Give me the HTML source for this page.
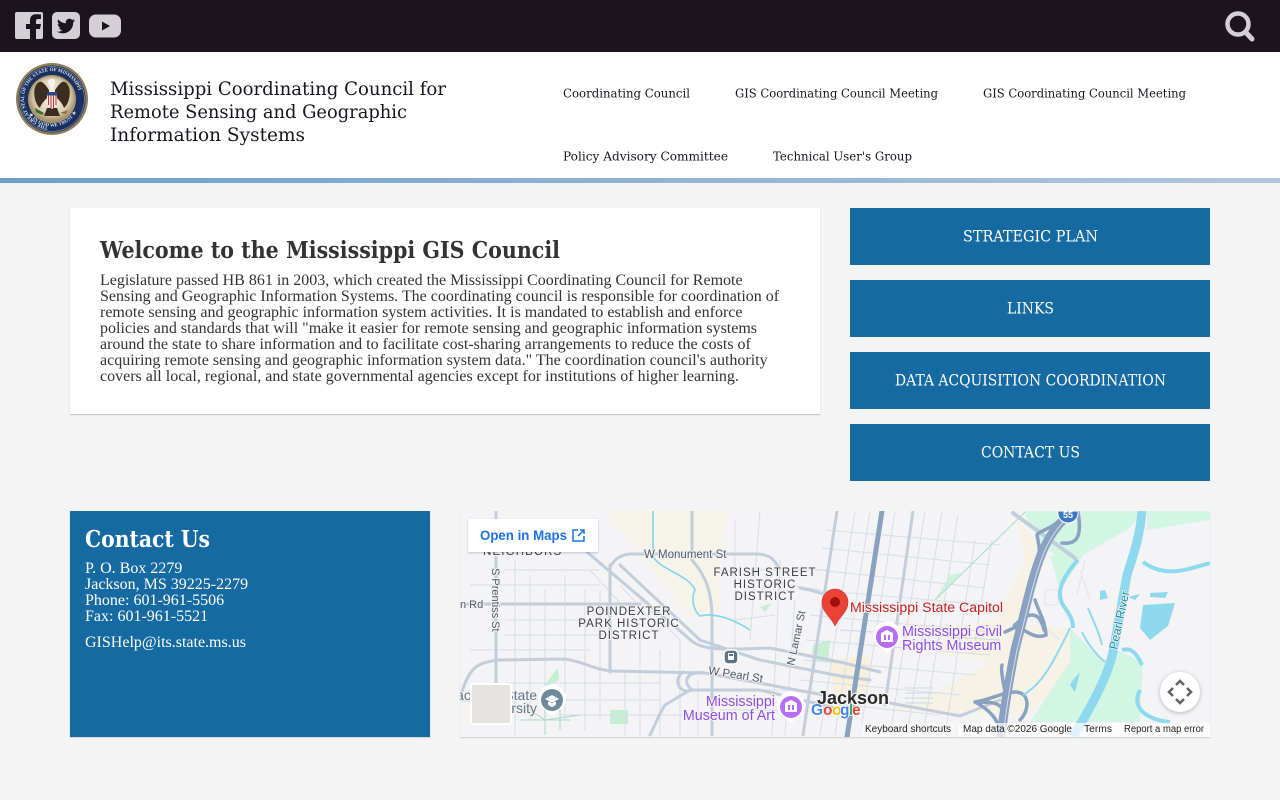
<!DOCTYPE html>
<html lang="en">
<head>
<meta charset="utf-8">
<title>Mississippi GIS Council</title>
<style>
html,body{margin:0;padding:0;width:1280px;height:800px;overflow:hidden;background:#f4f4f4}
.abs{position:absolute}
#top{left:0;top:0;width:1280px;height:52px;background:#1b141f}
#head{left:0;top:52px;width:1280px;height:126px;background:#fff}
#bar{left:0;top:178px;width:1280px;height:5px;background:linear-gradient(90deg,#6d9fc9,#b2c6de)}
#card{left:70px;top:208px;width:750px;height:206px;background:#fff;box-shadow:0 1px 1px rgba(0,0,0,.2)}
#copy{left:100px;top:273px;width:700px;font:16px/16px "Liberation Serif",serif;color:#333;white-space:nowrap}
.btn{left:850px;width:360px;height:57px;background:#146aa1}
#contact{left:70px;top:511px;width:360px;height:226px;background:#146aa1;box-shadow:0 1px 1px rgba(0,0,0,.15)}
#addr{left:85px;top:561px;font:16px/16px "Liberation Serif",serif;color:#fff;white-space:nowrap}
#mail{left:85px;top:635px;font:16px/16px "Liberation Serif",serif;color:#fff;white-space:nowrap}
#map{left:460px;top:511px;width:750px;height:226px;box-shadow:0 1px 1px rgba(0,0,0,.15)}
svg{display:block}
#overlay{left:0;top:0;pointer-events:none}
.sl{font-family:"DejaVu Serif","Liberation Serif",serif}
</style>
</head>
<body>
<div class="abs" id="top"></div>
<div class="abs" id="head"></div>
<div class="abs" id="bar"></div>
<div class="abs" id="card"></div>
<div class="abs" id="copy">Legislature passed HB 861 in 2003, which created the Mississippi Coordinating Council for Remote<br>Sensing and Geographic Information Systems. The coordinating council is responsible for coordination of<br>remote sensing and geographic information system activities. It is mandated to establish and enforce<br>policies and standards that will "make it easier for remote sensing and geographic information systems<br>around the state to share information and to facilitate cost-sharing arrangements to reduce the costs of<br>acquiring remote sensing and geographic information system data." The coordination council's authority<br>covers all local, regional, and state governmental agencies except for institutions of higher learning.</div>
<div class="abs btn" style="top:208px"></div>
<div class="abs btn" style="top:280px"></div>
<div class="abs btn" style="top:352px"></div>
<div class="abs btn" style="top:424px"></div>
<div class="abs" id="contact"></div>
<div class="abs" id="addr">P. O. Box 2279<br>Jackson, MS 39225-2279<br>Phone: 601-961-5506<br>Fax: 601-961-5521</div>
<div class="abs" id="mail">GISHelp@its.state.ms.us</div>

<div class="abs" id="map">
<svg width="750" height="226" viewBox="460 511 750 226" font-family="'Liberation Sans',sans-serif">
<defs>
<clipPath id="mc"><rect x="460" y="511" width="750" height="226"/></clipPath>
</defs>
<g clip-path="url(#mc)">
<rect x="460" y="511" width="750" height="226" fill="#f4f3f5"/>
<!-- land use -->
<path d="M607 511H727L720 562V612L690 615L647 562Z" fill="#f6f3e8"/>
<path d="M1017 520L1043 548L1020 625L1070 628L1072 665L1030 715L890 712L940 690L985 665L1000 610L1025 560Z" fill="#f6f2e6"/>
<path d="M1023 511H1143L1130 528L1083 555L1063 560L1043 546Z" fill="#d2f5e4"/>
<path d="M1147 511H1210V520L1147 530Z" fill="#d2f5e4"/>
<path d="M1070 628L1103 662L1116 650L1143 662L1140 722L1030 722L1070 662Z" fill="#d2f5e4"/>
<path d="M1050 556L1083 555L1060 592L1055 572Z" fill="#d2f5e4"/>
<path d="M830 660L870 655L868 690L835 700Z" fill="#f8f0da"/>
<path d="M935 600L950 575L961 573Z" fill="#cdf2dc"/>
<path d="M543 688L552 675L558 668L559 680Z M610 710H628V724H610Z M760 607L772 603L765 612Z M813 645L830 640L828 662L812 660Z" fill="#c5efd3"/>
<path d="M950 625L1000 620L995 660L940 655Z" fill="#f8f3e2" opacity=".8"/>
<!-- minor roads -->
<g fill="none" stroke="#d6dfe9" stroke-width="1">
<path d="M515 560V735M530 575V720M545 590V735M565 575V720M585 590V730M600 590V720M625 670V735M640 640V735M660 650V735M680 640V735M698 680V735M505 570H600M470 585H600M505 620H600M505 635H610M470 650H590M505 683H660M520 700H660M560 715H700M620 585L660 630M590 570L640 625M640 600L680 640"/>
<path d="M735 520V660M760 511L750 640M780 560L772 735M795 600L785 735M725 690H800M720 710H800M735 620L775 615M720 570H830M760 580L820 590"/>
<path d="M855 511L820 735M870 511L835 735M895 511L860 735M925 511L890 735M942 511L907 735M958 515L923 735M975 540L945 735M992 540L975 640"/>
<path d="M825 530L1000 545M822 548L990 565M818 570L985 588M815 590L990 605M810 615L990 632M806 640L990 655M804 660L975 675M800 680L960 695M800 700L940 715"/>
<path d="M1077 595L1085 560M1045 590H1058V605H1045ZM1035 620L1060 640M1080 570L1090 600" stroke="#dfe6ee"/>
<path d="M840 630L1000 640M905 688H933M905 693H933M905 698H933M905 703H933" stroke="#cdd8e4"/>
</g>
<path d="M935 600L1025 512" fill="none" stroke="#a5dfc5" stroke-width="1"/>
<path d="M500 705L520 695M530 710L545 720L580 715M520 720H570M545 700V735M560 705V730" fill="none" stroke="#a7dcc4" stroke-width="1"/>
<!-- main roads -->
<g fill="none" stroke="#c2cedc" stroke-width="3" stroke-linecap="round">
<path d="M496 511V700"/>
<path d="M460 604H640"/>
<path d="M462 692C470 665 480 662 500 660L565 659C585 662 595 670 612 671L705 673L840 698"/>
<path d="M610 567C615 558 622 554 632 554H755C770 554 775 560 778 567"/>
<path d="M587 552L693 642C705 650 720 650 770 648L840 662L880 672"/>
<path d="M620 565L700 640L760 660L840 676L870 680"/>
<path d="M610 565V672"/>
<path d="M692 511V560C705 575 712 590 712 620V735"/>
<path d="M837 511L803 735" stroke-width="3"/>
<path d="M913 511L885 705" stroke-width="3"/>
<path d="M692 690C680 680 690 670 705 673M683 672C672 680 680 695 692 690M690 690L760 690L835 708M690 690L665 705C660 712 655 725 650 735"/>
<path d="M473 700H462M800 588C808 590 815 590 840 600"/>
<path d="M890 703L960 716L1000 700"/>
<path d="M1013 513L1075 558" stroke="#c3cedb" stroke-width="4"/>
</g>
<!-- highways -->
<g fill="none" stroke="#8aa2c1" stroke-linecap="round">
<path d="M1065 518C1048 535 1040 552 1030 590L1015 650C1008 685 1004 710 1001 737" stroke-width="9"/>
<path d="M882 511L847 737" stroke-width="5"/>
<path d="M1060 520C1050 530 1040 530 1037 535C1040 550 1040 550 1037 565M1078 512C1082 535 1078 545 1062 543" stroke-width="3.5"/>
<path d="M1035 600C1040 615 1045 620 1046 635C1035 640 1025 630 1015 625C1030 610 1040 612 1044 630M1020 625L1005 632" stroke-width="3.5"/>
<path d="M975 702C990 700 1003 692 1015 692C1030 692 1030 710 1020 720M1005 692C1005 690 1000 670 1002 665M1003 710C998 700 985 703 975 702C990 710 1000 720 1000 737" stroke-width="3.5"/>
</g>
<path d="M1067 518C1050 535 1042 552 1032 590L1017 650C1010 685 1006 710 1003 737" fill="none" stroke="#d4dce8" stroke-width="1"/>
<!-- water -->
<g fill="none" stroke="#8fd9ef">
<path d="M1142 511C1140 535 1135 550 1127 575L1113 652C1108 675 1095 700 1073 737" stroke-width="9"/>
<path d="M1143 562C1165 578 1185 570 1210 563" stroke-width="4"/>
<path d="M1078 560C1060 580 1055 595 1065 608C1072 618 1073 622 1073 628" stroke-width="4"/>
<path d="M1088 608C1095 625 1100 635 1102 645M1082 632C1090 650 1105 662 1105 662M1023 695C1040 685 1050 670 1070 628" stroke-width="2"/>
<path d="M1122 650C1130 648 1135 650 1142 665M1140 690C1130 710 1150 720 1170 722" stroke-width="4"/>
<path d="M653 511V555C655 568 690 575 695 590C690 600 695 612 700 616C715 612 735 620 750 630" stroke-width="1.6" stroke="#7fd6ee"/>
</g>
<path d="M1143 605L1175 603L1168 626L1150 640L1140 628Z M1100 591L1105 590L1108 598L1100 600Z M1128 597L1140 594L1135 600Z M1150 593L1168 592L1165 598L1150 597Z M1073 680L1080 672L1075 692L1070 685Z" fill="#8fd9ef"/>
<!-- labels -->
<g fill="#3c4043" stroke="#f4f3f5" stroke-width="2" paint-order="stroke" stroke-linejoin="round">
<text x="483" y="555" font-size="11.5" letter-spacing="1.15">NEIGHBORS</text>
<text transform="translate(492,568) rotate(90)" font-size="11" fill="#4d5a66">S Prentiss St</text>
<text x="460" y="608" font-size="11" fill="#4d5a66">n Rd</text>
<text x="644" y="558" font-size="11.5" fill="#4d5a66">W Monument St</text>
<g font-size="11.5" letter-spacing="1" text-anchor="middle">
<text x="765" y="576">FARISH STREET</text><text x="765" y="588">HISTORIC</text><text x="765" y="600">DISTRICT</text>
<text x="629" y="615">POINDEXTER</text><text x="629" y="627">PARK HISTORIC</text><text x="629" y="639">DISTRICT</text>
</g>
<text transform="translate(794,666) rotate(-78)" font-size="11" fill="#4d5a66">N Lamar St</text>
<text transform="translate(708,674) rotate(9)" font-size="11.5" fill="#4d5a66">W Pearl St</text>
<text x="817" y="704" font-size="18.5" font-weight="bold" fill="#2b2b2b" stroke-width="2.5" textLength="72" lengthAdjust="spacingAndGlyphs">Jackson</text>
<text x="537" y="700" font-size="14" text-anchor="end" fill="#607787">Jackson State</text>
<text x="537" y="713" font-size="14" text-anchor="end" fill="#607787">University</text>
<g font-size="14.3" fill="#8e4fe0">
<text x="775" y="706" text-anchor="end">Mississippi</text>
<text x="775" y="720" text-anchor="end">Museum of Art</text>
<text x="902" y="636">Mississippi Civil</text>
<text x="902" y="650">Rights Museum</text>
</g>
<text x="850" y="612" font-size="14.2" fill="#c5221f" textLength="153" lengthAdjust="spacingAndGlyphs">Mississippi State Capitol</text>
<text transform="translate(1117,650) rotate(-78)" font-size="12" fill="#1c8aa6" stroke-width="1.5">Pearl River</text>
</g>
<!-- shield -->
<path d="M1058 511H1078C1079 518 1074 523 1068 523C1062 523 1057 518 1058 511Z" fill="#3d78c4" stroke="#fff"/>
<text x="1068" y="518" font-size="9" font-weight="bold" fill="#fff" text-anchor="middle">55</text>
<!-- transit -->
<rect x="724" y="650" width="14" height="14" rx="4" fill="#5d7487" stroke="#fff" stroke-width="1.5"/>
<rect x="728" y="653" width="6" height="7" rx="1" fill="#fff"/><rect x="729" y="654" width="4" height="2" fill="#5d7487"/>
<!-- pois -->
<g>
<path d="M552 716L541 707A14 14 0 1 1 563 707Z" fill="#fff"/><circle cx="552" cy="700" r="11" fill="#6f8a9c"/>
<path d="M545 699L552 695L559 699L552 703ZM548 702V705L552 707L556 705V702" fill="#fff"/>
<path d="M791 723L780 714A14 14 0 1 1 802 714Z" fill="#fff"/><circle cx="791" cy="707" r="11" fill="#b56ef5"/>
<path d="M785 712V703L791 700L797 703V712ZM788 705V710H790V705ZM792 705V710H794V705Z" fill="#fff" fill-rule="evenodd"/>
<path d="M887 653L876 644A14 14 0 1 1 898 644Z" fill="#fff"/><circle cx="887" cy="637" r="11" fill="#b56ef5"/>
<path d="M881 642V633L887 630L893 633V642ZM884 635V640H886V635ZM888 635V640H890V635Z" fill="#fff" fill-rule="evenodd"/>
</g>
<!-- marker -->
<path d="M835 626C830 616 822 612 822 602A13 13 0 0 1 848 602C848 612 840 616 835 626Z" fill="#ea4335" stroke="#c5221f" stroke-width=".5"/>
<circle cx="835" cy="602" r="5" fill="#a50e0e"/>
<!-- google -->
<g font-size="15.5" font-weight="bold" stroke="#fff" stroke-width="1.5" paint-order="stroke">
<text x="811" y="715" fill="#4285f4">G</text><text x="823" y="715" fill="#ea4335">o</text><text x="832" y="715" fill="#fbbc04">o</text><text x="840" y="715" fill="#4285f4">g</text><text x="849" y="715" fill="#34a853">l</text><text x="852" y="715" fill="#ea4335">e</text>
</g>
<!-- street view square -->
<rect x="471" y="684" width="40" height="40" rx="2" fill="#e5e3df" stroke="#fff" stroke-width="2"/>
<!-- open in maps -->
<rect x="468" y="519" width="130" height="33" fill="#fff" style="filter:drop-shadow(0 1px 1px rgba(0,0,0,.2))"/>
<text x="480" y="540" font-size="14" font-weight="bold" fill="#1a73e8" textLength="87" lengthAdjust="spacingAndGlyphs">Open in Maps</text>
<path d="M578 530H573V541H584V536M578 536L584 530M580 530H584V534" fill="none" stroke="#1a73e8" stroke-width="1.5"/>
<!-- fullscreen -->
<circle cx="1180" cy="692" r="20" fill="#fff" style="filter:drop-shadow(0 1px 2px rgba(0,0,0,.25))"/>
<path d="M1176 685L1180 681L1184 685M1176 699L1180 703L1184 699M1173 688L1169 692L1173 696M1187 688L1191 692L1187 696" fill="none" stroke="#666" stroke-width="2.6"/>
<!-- attribution -->
<rect x="958" y="723" width="252" height="14" fill="#fff" opacity=".7"/>
<rect x="860" y="723" width="95" height="14" fill="#fff" opacity=".45"/>
<g font-size="10" fill="#222">
<text x="865" y="732" textLength="86" lengthAdjust="spacingAndGlyphs">Keyboard shortcuts</text>
<text x="963" y="732" textLength="109" lengthAdjust="spacingAndGlyphs">Map data ©2026 Google</text>
<text x="1084" y="732" textLength="28" lengthAdjust="spacingAndGlyphs">Terms</text>
<text x="1124" y="732" textLength="80" lengthAdjust="spacingAndGlyphs">Report a map error</text>
</g>
</g>
</svg>
</div>

<svg class="abs" id="overlay" width="1280" height="800" viewBox="0 0 1280 800">
<defs>
<radialGradient id="sealbg" cx=".5" cy=".45" r=".55"><stop offset="0" stop-color="#fbf6ea"/><stop offset=".7" stop-color="#dfd2b4"/><stop offset="1" stop-color="#a08a60"/></radialGradient>
<path id="sealtop" d="M52 127A28 28 0 1 1 52.1 127"/>
<path id="sealbot" d="M25 106A28 28 0 0 0 79 106"/>
</defs>
<!-- social icons -->
<path d="M17 12H41A2 2 0 0 1 43 14V37A2 2 0 0 1 41 39H36V29H40L41 24H36V21C36 19.500 36.600 19 38 19H41V14.500C39 14.200 37.500 14.200 36 14.200C32 14.200 30 16.500 30 20.500V24H26V29H30V39H17A2 2 0 0 1 15 37V14A2 2 0 0 1 17 12Z" fill="#d2d0d4"/>
<rect x="52" y="12" width="28" height="27" rx="5" fill="#d2d0d4"/>
<path transform="translate(57,17) scale(.75)" fill="#1b141f" d="M23.953 4.57a10 10 0 01-2.825.775 4.958 4.958 0 002.163-2.723c-.951.555-2.005.959-3.127 1.184a4.92 4.92 0 00-8.384 4.482C7.69 8.095 4.067 6.13 1.64 3.162a4.822 4.822 0 00-.666 2.475c0 1.71.87 3.213 2.188 4.096a4.904 4.904 0 01-2.228-.616v.06a4.923 4.923 0 003.946 4.827 4.996 4.996 0 01-2.212.085 4.936 4.936 0 004.604 3.417 9.867 9.867 0 01-6.102 2.105c-.39 0-.779-.023-1.17-.067a13.995 13.995 0 007.557 2.209c9.053 0 13.998-7.496 13.998-13.985 0-.21 0-.42-.015-.63A9.935 9.935 0 0024 4.59z"/>
<rect x="89" y="14.500" width="32" height="23" rx="7" fill="#d2d0d4"/>
<path d="M102 21.500L110 26L102 30.500Z" fill="#1b141f"/>
<!-- search -->
<circle cx="1238" cy="24" r="10.500" fill="none" stroke="#d2d0d4" stroke-width="4.500"/>
<path d="M1245.500 32L1252 39" stroke="#d2d0d4" stroke-width="5" stroke-linecap="round"/>
<!-- seal -->
<circle cx="52" cy="99" r="36" fill="#8f7d58"/>
<circle cx="52" cy="99" r="33.500" fill="#1a3160"/>
<circle cx="52" cy="99" r="32.500" fill="none" stroke="#aab3c6" stroke-width=".5"/>
<circle cx="52" cy="99" r="24" fill="#ab9870"/>
<circle cx="52" cy="99" r="22.500" fill="url(#sealbg)"/>
<text font-family="Liberation Serif,serif" font-size="5" font-weight="bold" fill="#dfe3ec"><textPath href="#sealtop" startOffset="4">THE GREAT SEAL OF THE STATE OF MISSISSIPPI</textPath></text>
<text font-family="Liberation Serif,serif" font-size="5" font-weight="bold" fill="#dfe3ec"><textPath href="#sealbot" startOffset="9">★ IN GOD WE TRUST ★</textPath></text>
<path d="M49 96C45 100 41 104 40 108C35 104 33 94 35 87C37 83 39 81 42 82C45 84 47 87 49 90Z" fill="#3f2c20"/>
<path d="M55 96C59 100 63 104 64 108C69 104 71 94 69 87C67 83 65 81 62 82C59 84 57 87 55 90Z" fill="#3f2c20"/>
<path d="M47 108H57L60 116H44Z" fill="#3f2c20"/>
<path d="M49 85C47 82 48 79 52 79C56 79 56 83 54 86L52 90Z" fill="#f5f3ee"/>
<path d="M47 92H57V102C57 105 55 107 52 109C49 107 47 105 47 102Z" fill="#f4f3f1"/>
<rect x="47" y="92" width="10" height="3.500" fill="#2a4686"/>
<path d="M48.500 95.500V105M51 95.500V108M53.500 95.500V108M56 95.500V105" stroke="#c8333a" stroke-width="1.100"/>
<path d="M35 108L44 113L42 115L36 112Z" fill="#3d6a3c"/>
<path d="M60 113L68 110L66 114Z" fill="#8b6f3c"/>
<!-- header title -->
<g class="sl" fill="#1b141f" font-size="18.500">
<text x="110" y="95" textLength="336" lengthAdjust="spacingAndGlyphs">Mississippi Coordinating Council for</text>
<text x="110" y="118" textLength="297" lengthAdjust="spacingAndGlyphs">Remote Sensing and Geographic</text>
<text x="110" y="141" textLength="195" lengthAdjust="spacingAndGlyphs">Information Systems</text>
</g>
<!-- nav -->
<g class="sl" fill="#1b141f" font-size="12">
<text x="563" y="97.500" textLength="127" lengthAdjust="spacingAndGlyphs">Coordinating Council</text>
<text x="735" y="97.500" textLength="203" lengthAdjust="spacingAndGlyphs">GIS Coordinating Council Meeting</text>
<text x="983" y="97.500" textLength="203" lengthAdjust="spacingAndGlyphs">GIS Coordinating Council Meeting</text>
<text x="563" y="160.500" textLength="165" lengthAdjust="spacingAndGlyphs">Policy Advisory Committee</text>
<text x="773" y="160.500" textLength="139" lengthAdjust="spacingAndGlyphs">Technical User's Group</text>
</g>
<!-- headings -->
<text class="sl" x="100" y="258" font-size="23" font-weight="bold" fill="#333" textLength="460" lengthAdjust="spacingAndGlyphs">Welcome to the Mississippi GIS Council</text>
<text class="sl" x="85" y="547" font-size="23" font-weight="bold" fill="#fff" textLength="125" lengthAdjust="spacingAndGlyphs">Contact Us</text>
<!-- buttons -->
<g class="sl" fill="#fff" font-size="16">
<text x="963" y="241.500" textLength="135" lengthAdjust="spacingAndGlyphs">STRATEGIC PLAN</text>
<text x="1007" y="313.500" textLength="47" lengthAdjust="spacingAndGlyphs">LINKS</text>
<text x="895" y="385.500" textLength="271" lengthAdjust="spacingAndGlyphs">DATA ACQUISITION COORDINATION</text>
<text x="981" y="457.500" textLength="99" lengthAdjust="spacingAndGlyphs">CONTACT US</text>
</g>
</svg>
</body>
</html>
